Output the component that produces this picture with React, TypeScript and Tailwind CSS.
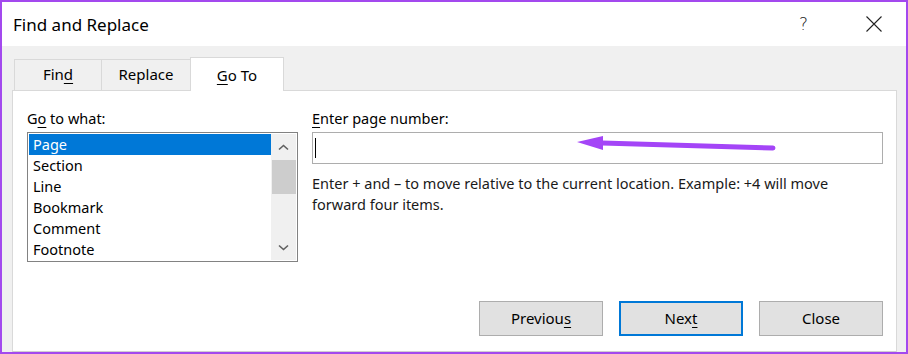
import { FunctionComponent, ReactElement } from "react";

const font = "font-['Noto_Sans',_'Open_Sans',_sans-serif]";

const ITEMS = ["Page", "Section", "Line", "Bookmark", "Comment", "Footnote"];

const U: FunctionComponent<{ c: string }> = ({ c }): ReactElement => (
  <span className="underline underline-offset-[3px] decoration-1">{c}</span>
);

const Chevron: FunctionComponent<{ down?: boolean }> = ({ down }) => (
  <svg width="11" height="7" viewBox="0 0 11 7">
    <path
      d={down ? "M1 1.5 L5.5 5.5 L10 1.5" : "M1 5.5 L5.5 1.5 L10 5.5"}
      stroke="#606060"
      strokeWidth="1.6"
      fill="none"
    />
  </svg>
);

const App: FunctionComponent = (): ReactElement => {
  return (
    <div
      className={`w-[908px] h-[354px] border-2 border-[#a349ee] bg-[#f0f0f0] flex flex-col text-[#000] ${font}`}
    >
      {/* title bar */}
      <div className="h-[44px] bg-white flex items-center pl-[11px] pr-[24px]">
        <span className="text-[17px] leading-none">Find and Replace</span>
        <span className="ml-auto text-[17px] leading-none text-[#222] mr-[58px] font-['DejaVu_Sans',_sans-serif] font-light">
          ?
        </span>
        <svg width="16" height="16" viewBox="0 0 16 16">
          <path d="M0.5 0.5 L15.5 15.5 M15.5 0.5 L0.5 15.5" stroke="#222" strokeWidth="1.1" />
        </svg>
      </div>

      {/* tabs */}
      <div className="h-[44px] flex items-end pl-[12px] text-[15px]">
        <div className="w-[87px] h-[31px] border-t border-l border-[#d9d9d9] flex items-center justify-center pb-[1px]">
          <span>
            Fin<U c="d" />
          </span>
        </div>
        <div className="w-[90px] h-[31px] border-t border-l border-r border-[#d9d9d9] flex items-center justify-center pb-[1px]">
          Replace
        </div>
        <div className="relative z-10 -ml-px -mb-px w-[94px] h-[34px] bg-white border-t border-l border-r border-[#d9d9d9] flex items-center justify-center pt-[1px]">
          <span>
            <U c="G" />o To
          </span>
        </div>
      </div>

      {/* panel */}
      <div className="ml-[10px] w-[885px] flex-1 bg-white border border-[#d9d9d9] border-b-[#cfcfcf] pt-[17px] pl-[14px] pr-[13px] pb-[15px] flex flex-col text-[14.5px]">
        <div className="grid grid-cols-[271px_571px] gap-x-[14px]">
          <div className="flex flex-col">
            <div className="leading-[20px] h-[20px]">
              G<U c="o" /> to what:
            </div>
            <div className="mt-[4px] w-[271px] h-[130px] border border-[#828282] flex p-px">
              <div className="flex-1 flex flex-col">
                {ITEMS.map((item, i) => (
                  <div
                    key={item}
                    className={`h-[21px] leading-[21px] pl-[4px] ${
                      i === 0 ? "bg-[#0078d7] text-white" : ""
                    }`}
                  >
                    {item}
                  </div>
                ))}
              </div>
              <div className="w-[25px] bg-[#f0f0f0] flex flex-col items-center">
                <div className="h-[26px] flex items-center justify-center">
                  <Chevron />
                </div>
                <div className="w-[24px] h-[34px] bg-[#cdcdcd]" />
                <div className="mt-auto h-[26px] flex items-center justify-center">
                  <Chevron down />
                </div>
              </div>
            </div>
          </div>

          <div className="flex flex-col">
            <div className="leading-[20px] h-[20px]">
              <U c="E" />nter page number:
            </div>
            <div className="relative mt-[4px] h-[32px] border border-[#adadad] flex items-center pl-[2px]">
              <div className="w-px h-[20px] bg-black" />
              <svg
                className="absolute left-[264px] top-[1px]"
                width="200"
                height="18"
                viewBox="0 0 200 18"
              >
                <path
                  d="M25 9 L196 14"
                  stroke="#a445f7"
                  strokeWidth="5"
                  strokeLinecap="round"
                />
                <path d="M0 8 L26 2 L26 16 Z" fill="#a445f7" />
              </svg>
            </div>
            <p className="mt-[9px] leading-[21px] text-[#1a1a1a] whitespace-nowrap">
              Enter + and – to move relative to the current location. Example: +4 will move
              <br />
              forward four items.
            </p>
          </div>
        </div>

        <div className="mt-auto flex justify-end gap-[16px] text-[15px]">
          <button className="w-[124px] h-[35px] bg-[#e1e1e1] border border-[#adadad]">
            Previou<U c="s" />
          </button>
          <button className="w-[124px] h-[35px] bg-[#e1e1e1] border-2 border-[#0078d7]">
            Nex<U c="t" />
          </button>
          <button className="w-[124px] h-[35px] bg-[#e1e1e1] border border-[#adadad]">
            Close
          </button>
        </div>
      </div>
    </div>
  );
};

export default App;
